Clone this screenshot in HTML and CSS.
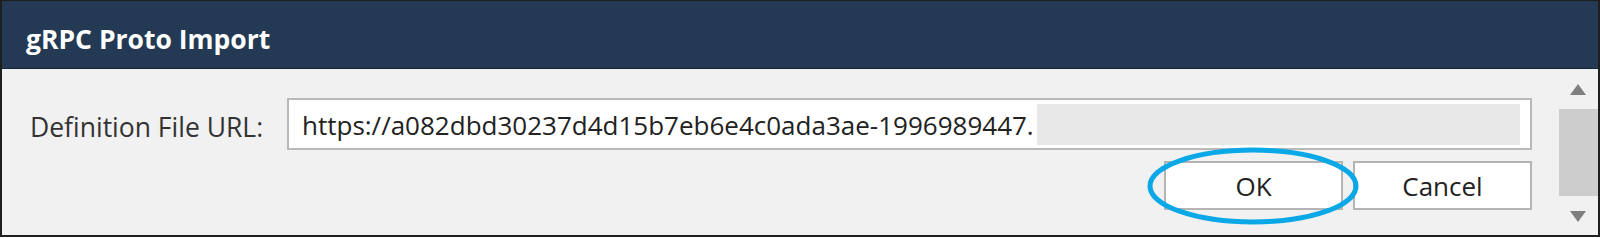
FILE: index.html
```html
<!DOCTYPE html>
<html lang="en">
<head>
  <meta charset="UTF-8">
  <title>gRPC Proto Import</title>
  <link rel="stylesheet" href="styles.css">
</head>
<body>
  <div class="dialog">
    <div class="dialog-header">
      <h1>gRPC Proto Import</h1>
    </div>

    <div class="dialog-body">
      <div class="content">
        <div class="field-row">
          <label>Definition File URL:</label>
          <div class="url-box">
            <span class="url-text">https://a082dbd30237d4d15b7eb6e4c0ada3ae-1996989447.</span>
            <span class="url-hidden"></span>
          </div>
        </div>

        <div class="buttons">
          <div class="btn-wrap">
            <button type="button" class="btn">OK</button>
            <!-- annotation circle drawn over the OK button -->
            <svg class="highlight" width="214" height="80" viewBox="0 0 214 80">
              <ellipse cx="107" cy="40" rx="103" ry="36" fill="none" stroke="#0aa8e6" stroke-width="5"/>
            </svg>
          </div>
          <button type="button" class="btn">Cancel</button>
        </div>
      </div>

      <div class="scrollbar">
        <span class="arrow up"></span>
        <span class="thumb"></span>
        <span class="arrow down"></span>
      </div>
    </div>
  </div>
</body>
</html>
```

FILE: styles.css
```css
body {
  margin: 0;
  background: #fff;
  font-family: "Open Sans", "Liberation Sans", sans-serif;
}

.dialog {
  width: 1600px;
  height: 237px;
  box-sizing: border-box;
  border: 2px solid #1e1e1e;
  border-top-width: 1px;
  background: #f1f1f1;
  display: flex;
  flex-direction: column;
}

.dialog-header {
  height: 67px;
  background: #243953;
  border-bottom: 1px solid #16263a;
  box-sizing: content-box;
  padding-left: 24px;
  display: flex;
  align-items: center;
}

.dialog-header h1 {
  margin: 0;
  padding-top: 8px;
  font-size: 26.5px;
  font-weight: 700;
  color: #fff;
}

.dialog-body {
  flex: 1;
  display: flex;
}

.content {
  flex: 1;
  padding: 29px 25px 0 28px;
}

.field-row {
  display: flex;
  align-items: center;
}

.field-row label {
  width: 257px;
  font-size: 26.5px;
  color: #333;
  padding-top: 5px;
}

.url-box {
  flex: 1;
  height: 52px;
  box-sizing: border-box;
  border: 2px solid #b9b9b9;
  background: #fff;
  display: flex;
  align-items: center;
  padding: 0 10px 0 13px;
}

.url-text {
  font-size: 26px;
  color: #222;
  white-space: nowrap;
  padding-top: 2px;
}

.url-hidden {
  flex: 1;
  height: 41px;
  margin-left: 3px;
  background: #e8e8e8;
}

.buttons {
  display: flex;
  justify-content: flex-end;
  gap: 10px;
  margin-top: 11px;
}

.btn-wrap {
  position: relative;
}

.btn {
  width: 179px;
  height: 49px;
  border: 2px solid #b4b4b4;
  background: #fff;
  font-family: "Open Sans", "Liberation Sans", sans-serif;
  font-size: 26px;
  color: #222;
  padding: 0;
}

.highlight {
  position: absolute;
  left: -18px;
  top: -15px;
}

.scrollbar {
  width: 41px;
  display: flex;
  flex-direction: column;
  align-items: center;
}

.arrow {
  width: 0;
  height: 0;
  border-left: 8px solid transparent;
  border-right: 8px solid transparent;
}

.arrow.up {
  margin-top: 15px;
  border-bottom: 11px solid #7f7f7f;
}

.arrow.down {
  margin-top: 15px;
  border-top: 11px solid #7f7f7f;
}

.thumb {
  align-self: flex-end;
  width: 39px;
  height: 87px;
  margin-top: 14px;
  background: #cdcdcd;
}
```
